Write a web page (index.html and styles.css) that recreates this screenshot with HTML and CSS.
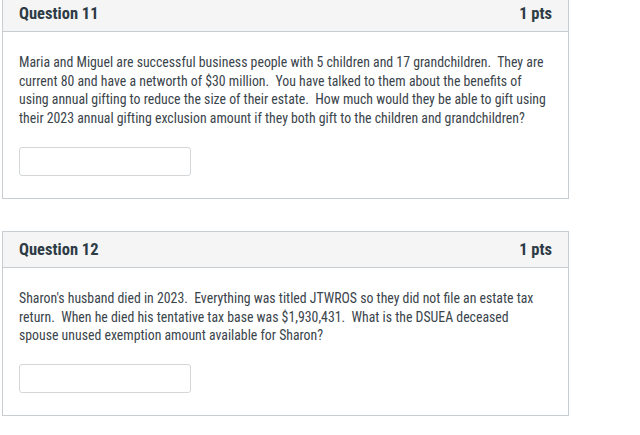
FILE: index.html
```html
<!DOCTYPE html>
<html>
<head>
<meta charset="utf-8">
<link rel="stylesheet" href="styles.css">
</head>
<body>
<div class="page">
  <div class="card first">
    <div class="card-header">
      <span class="q-title">Question 11</span>
      <span class="q-pts">1 pts</span>
    </div>
    <div class="card-body">
      <p class="q-text">Maria and Miguel are successful business people with 5 children and 17 grandchildren.&nbsp; They are current 80 and have a networth of $30 million.&nbsp; You have talked to them about the benefits of using annual gifting to reduce the size of their estate.&nbsp; How much would they be able to gift using their 2023 annual gifting exclusion amount if they both gift to the children and grandchildren?</p>
      <input class="answer" type="text">
    </div>
  </div>
  <div class="card">
    <div class="card-header">
      <span class="q-title">Question 12</span>
      <span class="q-pts">1 pts</span>
    </div>
    <div class="card-body">
      <p class="q-text">Sharon's husband died in 2023.&nbsp; Everything was titled JTWROS so they did not file an estate tax return.&nbsp; When he died his tentative tax base was $1,930,431.&nbsp; What is the DSUEA deceased spouse unused exemption amount available for Sharon?</p>
      <input class="answer" type="text">
    </div>
  </div>
</div>
</body>
</html>
```
FILE: styles.css
```css
html, body {
  margin: 0;
  padding: 0;
  background: #ffffff;
}
body {
  font-family: Roboto, "Liberation Sans", sans-serif;
  font-stretch: 87%;
  color: #2d3b45;
}
.page {
  display: flex;
  flex-direction: column;
  gap: 32px;
  width: 567px;
  padding-left: 2px;
}
.card {
  border: 1px solid #c7cdd1;
  background: #fff;
}
.card.first {
  margin-top: -5px;
}
.card-header {
  display: flex;
  justify-content: space-between;
  align-items: center;
  height: 35px;
  padding: 0 16px;
  background: #f5f5f5;
  border-bottom: 1px solid #c7cdd1;
  font-weight: 700;
  font-size: 16.5px;
}
.card-body {
  padding: 21px 16px 22px;
  display: flex;
  flex-direction: column;
  align-items: flex-start;
}
.q-text {
  margin: 0;
  font-size: 13.8px;
  line-height: 18.7px;
  width: 530px;
  color: #3a444b;
}
.answer {
  margin-top: 19px;
  width: 172px;
  height: 29px;
  box-sizing: border-box;
  border: 1px solid #d3d7da;
  border-radius: 3px;
  background: #fff;
  padding: 0;
}
```
